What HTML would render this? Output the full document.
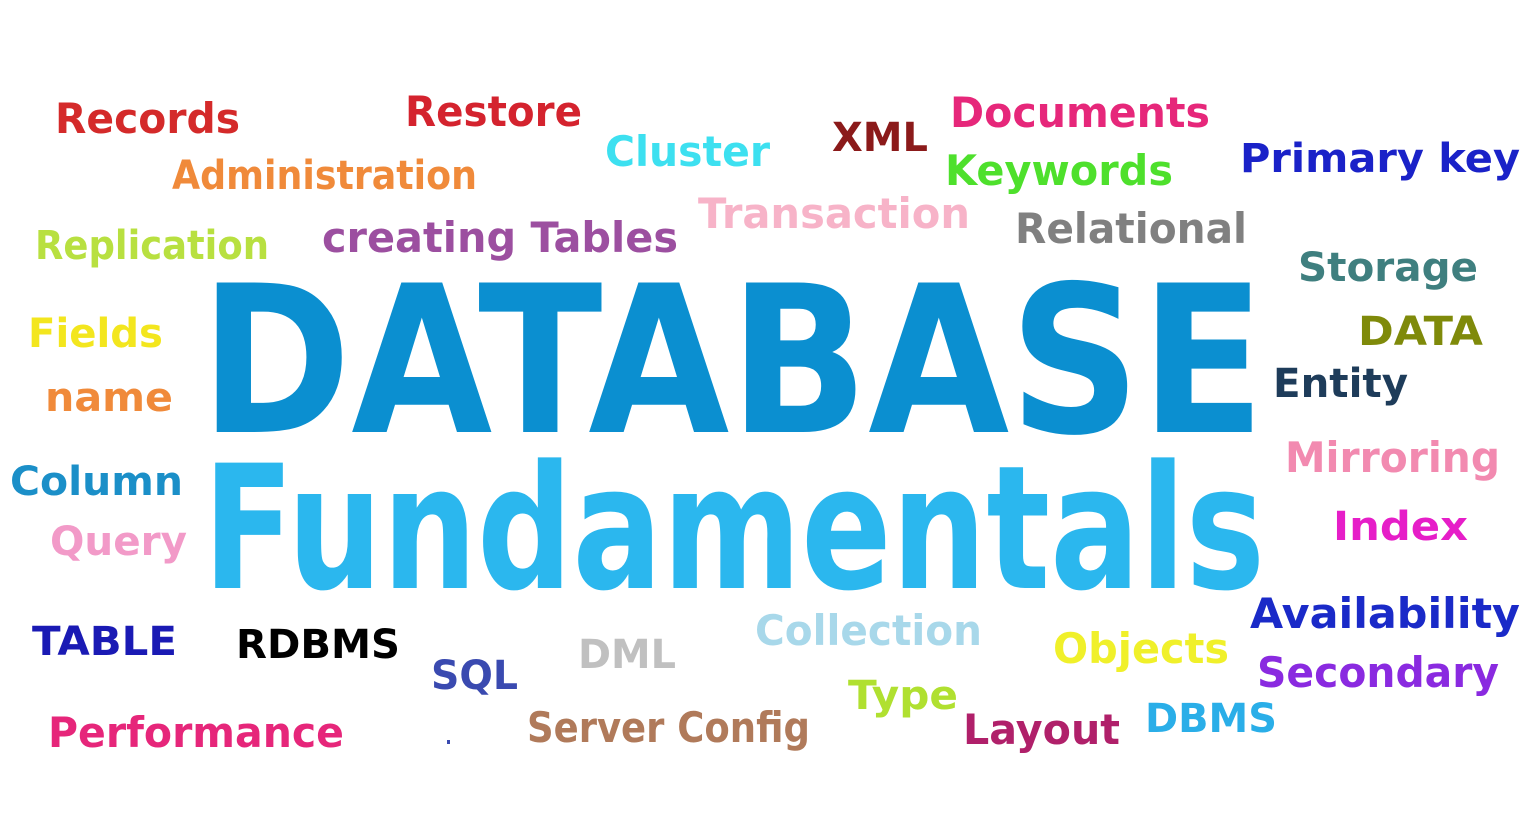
<!DOCTYPE html>
<html><head><meta charset="utf-8"><style>
html,body{margin:0;padding:0;background:#fff;}
svg{display:block}
text{font-family:"DejaVu Sans","Liberation Sans",sans-serif;font-weight:bold;}
</style></head><body>
<svg width="1540" height="832" viewBox="0 0 1540 832" xmlns="http://www.w3.org/2000/svg">
<rect width="1540" height="832" fill="#fff"/>
<g font-size="42" lengthAdjust="spacingAndGlyphs">
<text x="55" y="133" fill="#d42a2a" textLength="185" lengthAdjust="spacingAndGlyphs">Records</text>
<text x="405" y="126" fill="#d4232e" textLength="177" lengthAdjust="spacingAndGlyphs">Restore</text>
<text x="172" y="189" fill="#f08a3a" font-size="40" textLength="305" lengthAdjust="spacingAndGlyphs">Administration</text>
<text x="605" y="166" fill="#3de0f0" textLength="165" lengthAdjust="spacingAndGlyphs">Cluster</text>
<text x="832" y="151" fill="#8b1a1a" font-size="40" textLength="96" lengthAdjust="spacingAndGlyphs">XML</text>
<text x="950" y="127" fill="#e6277a" textLength="260" lengthAdjust="spacingAndGlyphs">Documents</text>
<text x="945" y="185" fill="#4ee02c" textLength="228" lengthAdjust="spacingAndGlyphs">Keywords</text>
<text x="1240" y="172" fill="#1a22c8" font-size="40" textLength="280" lengthAdjust="spacingAndGlyphs">Primary key</text>
<text x="698" y="228" fill="#f7b3c8" textLength="272" lengthAdjust="spacingAndGlyphs">Transaction</text>
<text x="1015" y="243" fill="#808080" textLength="232" lengthAdjust="spacingAndGlyphs">Relational</text>
<text x="35" y="259" fill="#b8e040" font-size="40" textLength="234" lengthAdjust="spacingAndGlyphs">Replication</text>
<text x="322" y="252" fill="#9c4fa0" textLength="356" lengthAdjust="spacingAndGlyphs">creating Tables</text>
<text x="1298" y="281" fill="#3f7f7f" font-size="40" textLength="180" lengthAdjust="spacingAndGlyphs">Storage</text>
<text x="200" y="432" fill="#0b8fd0" font-size="205" textLength="1065" lengthAdjust="spacingAndGlyphs">DATABASE</text>
<text x="203" y="588" fill="#2bb7ee" font-size="172" textLength="1062" lengthAdjust="spacingAndGlyphs">Fundamentals</text>
<text x="28" y="347" fill="#f3e61e" font-size="40" textLength="135" lengthAdjust="spacingAndGlyphs">Fields</text>
<text x="1358" y="345" fill="#7f8a0a" font-size="40" textLength="125" lengthAdjust="spacingAndGlyphs">DATA</text>
<text x="45" y="411" fill="#f08a3a" font-size="40" textLength="128" lengthAdjust="spacingAndGlyphs">name</text>
<text x="1273" y="397" fill="#1e3c5a" font-size="40" textLength="135" lengthAdjust="spacingAndGlyphs">Entity</text>
<text x="10" y="495" fill="#1b8fc8" font-size="40" textLength="173" lengthAdjust="spacingAndGlyphs">Column</text>
<text x="1285" y="472" fill="#f28ab0" textLength="215" lengthAdjust="spacingAndGlyphs">Mirroring</text>
<text x="50" y="555" fill="#f29ac8" font-size="40" textLength="137" lengthAdjust="spacingAndGlyphs">Query</text>
<text x="1333" y="540" fill="#e61ec8" font-size="40" textLength="135" lengthAdjust="spacingAndGlyphs">Index</text>
<text x="1250" y="628" fill="#1a2ac8" textLength="270" lengthAdjust="spacingAndGlyphs">Availability</text>
<text x="32" y="655" fill="#1a1ab4" font-size="40" textLength="145" lengthAdjust="spacingAndGlyphs">TABLE</text>
<text x="236" y="658" fill="#000" font-size="40" textLength="164" lengthAdjust="spacingAndGlyphs">RDBMS</text>
<text x="578" y="668" fill="#c0c0c0" font-size="40" textLength="98" lengthAdjust="spacingAndGlyphs">DML</text>
<text x="755" y="645" fill="#a8d8ea" textLength="227" lengthAdjust="spacingAndGlyphs">Collection</text>
<text x="1053" y="663" fill="#f0f02a" textLength="176" lengthAdjust="spacingAndGlyphs">Objects</text>
<text x="1257" y="687" fill="#8a2ae0" textLength="242" lengthAdjust="spacingAndGlyphs">Secondary</text>
<text x="431" y="689" fill="#3a4ab0" font-size="40" textLength="87" lengthAdjust="spacingAndGlyphs">SQL</text>
<text x="848" y="709" fill="#b0e030" font-size="40" textLength="110" lengthAdjust="spacingAndGlyphs">Type</text>
<text x="48" y="747" fill="#e6267a" textLength="296" lengthAdjust="spacingAndGlyphs">Performance</text>
<text x="527" y="742" fill="#b07a5a" textLength="283" lengthAdjust="spacingAndGlyphs">Server Config</text>
<text x="963" y="744" fill="#b0206a" textLength="157" lengthAdjust="spacingAndGlyphs">Layout</text>
<text x="1145" y="732" fill="#2aaee8" font-size="40" textLength="132" lengthAdjust="spacingAndGlyphs">DBMS</text>
</g>
<rect x="447" y="740" width="3" height="4" fill="#3a4ab0"/>
</svg>
</body></html>
